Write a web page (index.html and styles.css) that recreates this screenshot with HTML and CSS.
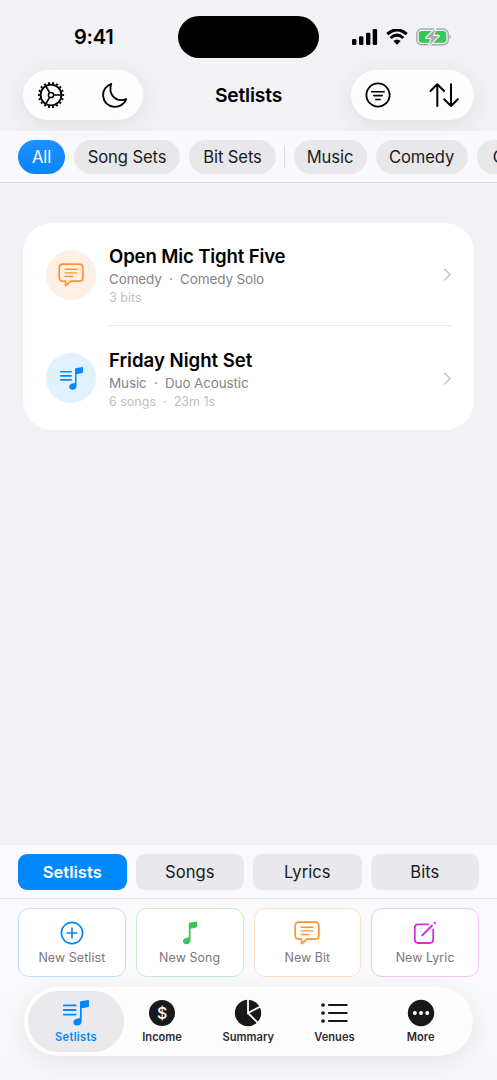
FILE: index.html
```html
<!DOCTYPE html>
<html lang="en">
<head>
<meta charset="utf-8">
<title>Setlists</title>
<link rel="stylesheet" href="styles.css">
</head>
<body>
<svg class="defs" aria-hidden="true">
  <symbol id="bubble" viewBox="0 0 26 24">
    <path d="M5 1.2H21Q24.8 1.2 24.8 5V14.4Q24.8 18.2 21 18.2H12.6L8.3 22.4Q7.6 22.9 7.6 22V18.2H5Q1.2 18.2 1.2 14.4V5Q1.2 1.2 5 1.2Z" fill="none" stroke="currentColor" stroke-width="1.7" stroke-linejoin="round"/>
    <path d="M7 6.3H19M7 9.9H19M7 13.5H15" fill="none" stroke="currentColor" stroke-width="1.4" stroke-linecap="round"/>
  </symbol>
  <symbol id="notelist" viewBox="0 0 26 26">
    <path d="M.8 5.4H12.6M.8 10H12.6M.8 14.6H12.6" fill="none" stroke="currentColor" stroke-width="1.8" stroke-linecap="round"/>
    <path d="M17 2.3Q17 1.5 17.8 1.3L25.2 0Q26 0 26 .7V6Q26 6.7 25.3 6.9L18.7 8.3V20.5Q18.7 25.6 14 25.6Q10.4 25.4 10.4 22.3Q10.4 19.5 14 18.7L16 18.3Q17 18 17 17Z" fill="currentColor"/>
  </symbol>
  <symbol id="note" viewBox="0 0 14 23">
    <path d="M5.8 2.3Q5.8 1.5 6.6 1.3L13.2 0Q14 0 14 .7V5Q14 5.7 13.3 5.9L7.5 7.2V18Q7.5 22.7 3.4 22.7Q0 22.5 0 19.8Q0 17.2 3.2 16.6L4.8 16.3Q5.8 16 5.8 15Z" fill="currentColor"/>
  </symbol>
</svg>
<div class="screen">
  <header class="top">
    <div class="status">
      <div class="time">9:41</div>
      <div class="island"></div>
      <div class="indicators">
        <svg width="26" height="16" viewBox="0 0 26 16"><rect x="0" y="10" width="4.4" height="6" rx="1.2"/><rect x="7" y="7.3" width="4.4" height="8.7" rx="1.2"/><rect x="14" y="3.8" width="4.4" height="12.2" rx="1.2"/><rect x="20.7" y="0" width="4.4" height="16" rx="1.2"/></svg>
        <svg class="wifi" width="22" height="16" viewBox="0 0 22 16"><path d="M1.3 5.2Q11-3.4 20.7 5.2M4.7 9Q11 3.3 17.3 9" fill="none" stroke="#000" stroke-width="3"/><path d="M11 15.8L7.3 12.1Q11 8.9 14.7 12.1Z"/></svg>
        <svg class="battery" width="36" height="18" viewBox="0 0 36 18"><rect x=".8" y="1" width="31.5" height="15.8" rx="5" fill="none" stroke="#aaa9ae" stroke-width="1.4"/><rect x="2.8" y="3" width="27.5" height="11.8" rx="3.3" fill="#34c759"/><path d="M33.5 6.2Q36 8.9 33.5 11.6Z" fill="#aaa9ae"/><path d="M19.2 1L10.2 9.9H15.5L13.4 17L22.8 7.9H17.3Z" fill="#aaa9ae" stroke="#f2f1f6" stroke-width="2.2" paint-order="stroke" stroke-linejoin="round"/></svg>
      </div>
    </div>
    <div class="nav">
      <div class="glass glass-left">
        <svg width="28" height="28" viewBox="-14 -14 28 28" fill="none" stroke="#000"><circle r="12.1" stroke-width="2" pathLength="180" stroke-dasharray="4.5 5.5" stroke-dashoffset="2.25"/><circle r="10.4" stroke-width="1.9"/><circle r="2.6" stroke-width="1.5"/><path d="M2.7 0H10.4M-1.4-2.3L-5.2-9M-1.4 2.3L-5.2 9" stroke-width="1.7"/></svg>
        <svg width="28" height="28" viewBox="0 0 28 28" fill="none" stroke="#000" stroke-width="1.8" stroke-linejoin="round"><path d="M10.3 2.8Q1.5 6.4 2.1 14.9Q3.2 24.8 13.4 25.8Q22 25.8 25.3 18.1Q17.7 20.9 12.8 16.2Q7.4 10.5 10.3 2.8Z"/></svg>
      </div>
      <h1>Setlists</h1>
      <div class="glass glass-right">
        <svg width="28" height="28" viewBox="0 0 28 28" fill="none" stroke="#000" stroke-width="1.8" stroke-linecap="round"><circle cx="14" cy="14" r="11.6"/><path d="M7.8 10.7H20.2M9.8 14.6H18.2M11.8 18.5H16.2" stroke-width="1.6"/></svg>
        <svg width="30" height="28" viewBox="0 0 30 28" fill="none" stroke="#000" stroke-width="2" stroke-linecap="round" stroke-linejoin="round"><path d="M8.3 25V3.2M1.5 10L8.3 3.2L15.1 10M22 3.2V25M15.2 18.2L22 25L28.8 18.2"/></svg>
      </div>
    </div>
  </header>
  <nav class="filters">
    <span class="chip chip-all">All</span><span class="chip chip-songs">Song Sets</span><span class="chip chip-bits">Bit Sets</span><i class="rule"></i><span class="chip chip-music">Music</span><span class="chip chip-comedy">Comedy</span><span class="chip chip-more">Other</span>
  </nav>
  <main>
    <section class="list">
      <article class="row">
        <div class="avatar orange"><svg width="26" height="24"><use href="#bubble"/></svg></div>
        <div class="info"><h2>Open Mic Tight Five</h2><p>Comedy &nbsp;·&nbsp; Comedy Solo</p><small>3 bits</small></div>
        <svg class="chev" width="9" height="13" viewBox="0 0 9 13"><path d="M1.4 1L7.2 6.5L1.4 12"/></svg>
      </article>
      <article class="row second">
        <div class="avatar blue"><svg width="23" height="23"><use href="#notelist"/></svg></div>
        <div class="info"><h2>Friday Night Set</h2><p>Music &nbsp;·&nbsp; Duo Acoustic</p><small>6 songs &nbsp;·&nbsp; 23m 1s</small></div>
        <svg class="chev" width="9" height="13" viewBox="0 0 9 13"><path d="M1.4 1L7.2 6.5L1.4 12"/></svg>
      </article>
    </section>
  </main>
  <footer>
    <div class="segments"><span class="active">Setlists</span><span>Songs</span><span>Lyrics</span><span>Bits</span></div>
    <div class="actions">
      <div class="card c-blue"><svg width="24" height="24" viewBox="0 0 24 24" fill="none" stroke="currentColor" stroke-width="1.7" stroke-linecap="round"><circle cx="12" cy="12" r="10.6"/><path d="M12 7.2V16.8M7.2 12H16.8"/></svg><span>New Setlist</span></div>
      <div class="card c-green"><svg width="14" height="23"><use href="#note"/></svg><span>New Song</span></div>
      <div class="card c-orange"><svg width="26" height="24"><use href="#bubble"/></svg><span>New Bit</span></div>
      <div class="card c-purple"><svg width="24" height="24" viewBox="0 0 24 24" fill="none" stroke="currentColor" stroke-width="1.8" stroke-linecap="round"><path d="M15.2 3.4H5.2Q1.8 3.4 1.8 6.8V18.6Q1.8 22 5.2 22H16.8Q20.2 22 20.2 18.6V8.6"/><path d="M9.2 14.4L18.9 4.7" stroke-width="2"/><path d="M21.8 2L21.9 1.9" stroke-width="2.2"/></svg><span>New Lyric</span></div>
    </div>
    <div class="tabs">
      <div class="tab selected"><svg width="26" height="26"><use href="#notelist"/></svg><span>Setlists</span></div>
      <div class="tab"><div class="coin">$</div><span>Income</span></div>
      <div class="tab"><svg width="28" height="28" viewBox="-14 -14 28 28"><circle r="13.2" fill="#19191b"/><path d="M0-14V0L12.5-6.5M0 0L9.8 9.8" fill="none" stroke="#fdfdfe" stroke-width="1.8"/></svg><span>Summary</span></div>
      <div class="tab"><svg width="28" height="28" viewBox="0 0 28 28" fill="none" stroke="#19191b" stroke-linecap="round"><path d="M8.9 6H26.7M8.9 14H26.7M8.9 22H26.7" stroke-width="2.1"/><path d="M3 6H3.1M3 14H3.1M3 22H3.1" stroke-width="3.7"/></svg><span>Venues</span></div>
      <div class="tab"><svg width="28" height="28" viewBox="-14 -14 28 28"><circle r="13.2" fill="#19191b"/><path d="M-6.2 0h.1M0 0h.1M6.2 0h.1" stroke="#fff" stroke-width="3.8" stroke-linecap="round"/></svg><span>More</span></div>
    </div>
  </footer>
</div>
</body>
</html>
```
FILE: styles.css
```css
* { box-sizing: border-box; }
body { margin: 0; font-family: Inter, "Liberation Sans", sans-serif; color: #000; background: #f2f1f6; }
h1, h2, p { margin: 0; }
svg { display: block; flex: none; }
.defs { display: none; }
.screen { width: 497px; height: 1080px; display: flex; flex-direction: column; overflow: hidden; }

.top { height: 131px; overflow: hidden; flex: none; }
.status { height: 70px; display: grid; grid-template-columns: 178px 141px 178px; padding-top: 16px; }
.time { font-size: 20px; font-weight: 600; line-height: 43px; padding-left: 74px; letter-spacing: -.2px; }
.island { height: 42px; border-radius: 21px; background: #000; }
.indicators { display: flex; align-items: center; height: 42px; padding-left: 33px; }
.wifi { margin-left: 8px; }
.battery { margin-left: 8px; }
.nav { height: 50px; padding: 0 23px; display: grid; grid-template-columns: 120px 1fr 123px; align-items: center; }
.glass { height: 50px; border-radius: 25px; background: #fdfdfe; display: flex; align-items: center; justify-content: space-between; box-shadow: 0 5px 28px rgba(40, 40, 55, .09); }
.glass-left { padding: 0 14px; }
.glass-right { padding: 0 15px 0 13px; }
.nav h1 { font-size: 19.3px; font-weight: 600; text-align: center; letter-spacing: -.2px; padding: 0 0 0 3px; }

.filters { height: 52px; flex: none; display: flex; align-items: flex-start; padding: 9px 0 0 18px; background: #f9f9fb; border-bottom: 1.5px solid #dadadd; overflow: hidden; }
.chip { height: 34px; border-radius: 17px; flex: none; margin-right: 9px; background: #e8e8ea; color: #1b1b1d; font-size: 16.6px; line-height: 35px; text-align: center; letter-spacing: -.1px; }
.chip-all { width: 47px; background: linear-gradient(#1e8fff, #0885ff); color: #fff; }
.chip-songs { width: 106px; }
.chip-bits { width: 87px; margin-right: 8px; }
.rule { flex: none; width: 1px; height: 22px; margin: 6px 8.5px 0 0; background: #dedee1; }
.chip-music { width: 73px; }
.chip-comedy { width: 92px; }
.chip-more { width: 76px; }

main { flex: 1; padding: 40px 23px 0; }
.list { height: 207px; border-radius: 29px; background: #fff; }
.row { height: 103.5px; display: flex; align-items: center; padding: 0 22px 0 23px; }
.avatar { flex: none; width: 50px; height: 50px; border-radius: 50%; display: flex; align-items: center; justify-content: center; margin-right: 13px; }
.orange { background: #fff0e5; color: #ff9230; }
.blue { background: #e0f1ff; color: #0a87ff; }
.info { flex: none; width: 343px; height: 103px; padding-top: 22px; }
.row:first-child .info { border-bottom: 1.5px solid #e8e8ea; }
.info h2 { font-size: 18.6px; line-height: 23px; font-weight: 600; letter-spacing: -.15px; }
.second h2 { letter-spacing: 0; }
.info p { font-size: 13.5px; line-height: 21px; margin-top: 1px; color: #858588; letter-spacing: -.14px; }
.info small { display: block; font-size: 12.5px; line-height: 16px; color: #c0c0c2; }
.chev { margin-left: -9px; fill: none; stroke: #c4c4c7; stroke-width: 1.4; stroke-linecap: round; stroke-linejoin: round; }

footer { height: 235px; flex: none; background: linear-gradient(#fafafc 55%, #f7f7fa); }
.segments { height: 54px; padding: 9px 18px; display: grid; grid-template-columns: repeat(4, 1fr); gap: 9px; border-bottom: 1.5px solid #e3e3e6; }
.segments span { height: 36px; border-radius: 9px; background: #e9e9ed; color: #1b1b1d; font-size: 16.6px; line-height: 37px; text-align: center; }
.segments .active { background: #0088ff; color: #fff; font-weight: 600; }
.actions { height: 88px; padding: 9px 18px 10px; display: grid; grid-template-columns: repeat(4, 1fr); gap: 10px; }
.card { border: 1px solid; border-radius: 11px; background: #fff; display: flex; flex-direction: column; align-items: center; padding-top: 12px; }
.card svg { height: 24px; }
.card span { font-size: 12.4px; line-height: 16px; margin-top: 5px; color: #77777a; letter-spacing: .1px; }
.c-blue { color: #0a87ff; border-color: #b9deff; }
.c-green { color: #34c759; border-color: #c5eece; }
.c-orange { color: #ff9230; border-color: #ffe0c5; }
.c-purple { color: #d52de0; border-color: #f1c6f6; }
.tabs { height: 69px; margin: 0 24px; padding: 4px 5px 4px 4px; border-radius: 34.5px; background: #fdfdfe; display: flex; box-shadow: 0 6px 24px rgba(40, 40, 55, .09); }
.tab { flex: none; width: 86.2px; display: flex; flex-direction: column; align-items: center; padding-top: 8px; }
.tab svg, .coin { height: 28px; }
.tab span { font-size: 11.1px; line-height: 16px; margin-top: 2px; font-weight: 600; color: #2b2b2d; }
.selected { width: 96px; height: 61px; border-radius: 30.5px; background: #eaeaec; color: #0088ff; margin-right: -5px; }
.tab.selected span { color: #0088ff; letter-spacing: .3px; }
.tab .coin { width: 26px; height: 26px; margin: 1px 0; border-radius: 50%; background: #19191b; color: #fff; font-size: 16px; font-weight: 500; line-height: 26px; text-align: center; }
```
